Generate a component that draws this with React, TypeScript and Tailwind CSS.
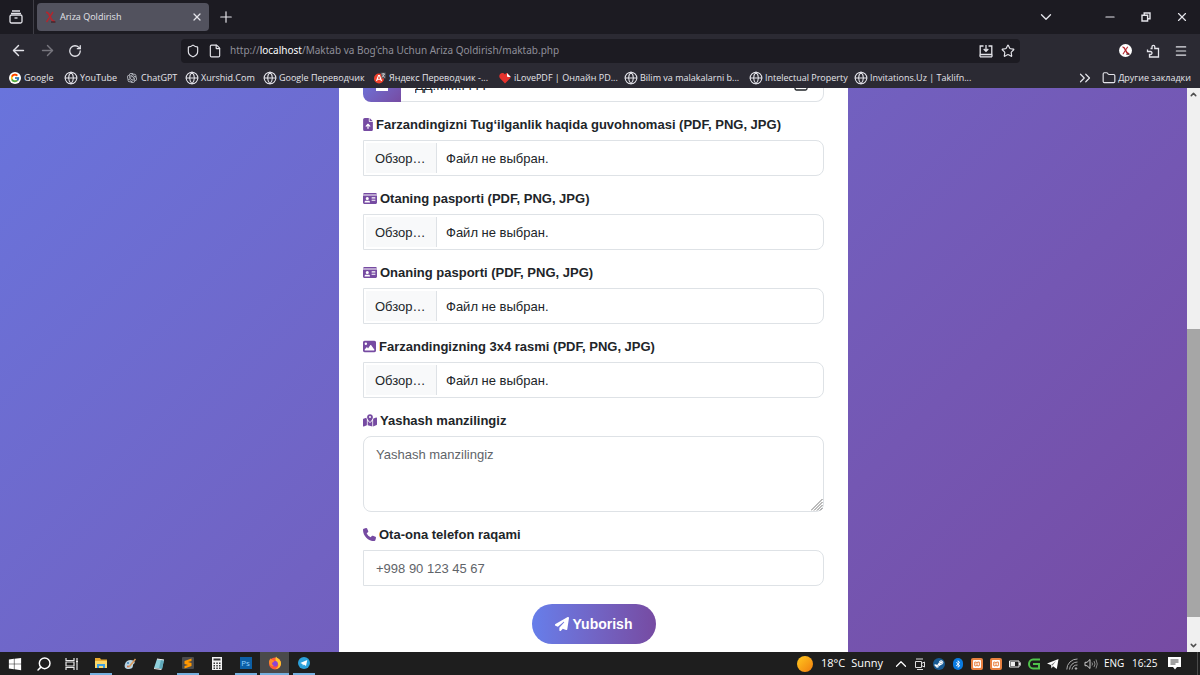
import React from "react";
import {
  FaBluetoothB,
  FaFileArrowUp,
  FaIdCard,
  FaImage,
  FaMapLocationDot,
  FaPaperPlane,
  FaPhone,
  FaSteamSymbol,
  FaWindows,
} from "react-icons/fa6";
import { FcGoogle } from "react-icons/fc";
import { RiOpenaiFill } from "react-icons/ri";
import { SiXampp } from "react-icons/si";
import {
  ArrowLeft,
  ArrowRight,
  ChevronDown,
  ChevronsRight,
  ChevronUp,
  File,
  Folder,
  Globe,
  Menu,
  Minus,
  Plus,
  RotateCw,
  Search,
  Shield,
  Star,
  X,
} from "lucide-react";

const XLogo = ({ className }: { className: string }) => (
  <svg viewBox="0 0 12 12" className={className} fill="none">
    <path d="M2 1.500C4 1 5 3 6 5.500S9 10.500 11 10.500" stroke="#b3262e" strokeWidth="1.800" />
    <path d="M9 1 2.500 11" stroke="#b3262e" strokeWidth="1.400" />
    <path d="M7 11h4.500" stroke="#3b2026" strokeWidth="1.200" />
  </svg>
);

const YandexIcon = () => (
  <svg viewBox="0 0 12 12" className="size-3">
    <circle cx="5" cy="6.500" r="5" fill="#f0402c" />
    <path d="m2.500 9 2-5.500h1L7.500 9M3.300 7.300h3" stroke="#fff" strokeWidth="1.100" fill="none" />
    <path d="M6.500.5H12v6H8z" fill="#4a4a52" />
    <path d="M7.500 2H11M9.200 1v1M8 5.500 10.500 2M8.500 3.300 11 5.500" stroke="#ddd" strokeWidth=".8" fill="none" />
  </svg>
);

const LoveIcon = () => (
  <svg viewBox="0 0 12 12" className="size-3">
    <path d="M6 11.500 1 6.300C-.8 3.800 1 1 3.300 1 4.600 1 5.500 1.600 6 2.500 6.500 1.600 7 1 8 1l3.800 4c0 .6-.4 1-.8 1.500z" fill="#e5322d" />
    <path d="m8 1 3.800 4H9a1 1 0 0 1-1-1z" fill="#fff" />
  </svg>
);

const globe = <Globe className="-mx-px size-[14px]" strokeWidth={1.8} />;

const bookmarks = [
  { name: "Google", icon: <span className="rounded-full bg-white p-px"><FcGoogle className="size-[10px]" /></span>, width: "w-[56px]" },
  { name: "YouTube", icon: globe, width: "w-[61px]" },
  { name: "ChatGPT", icon: <RiOpenaiFill className="size-3 text-gray-300" />, width: "w-[60px]" },
  { name: "Xurshid.Com", icon: globe, width: "w-[78px]" },
  { name: "Google Переводчик", icon: globe, width: "w-[110px]" },
  { name: "Яндекс Переводчик -...", icon: <YandexIcon />, width: "w-[125px]" },
  { name: "iLovePDF | Онлайн PD...", icon: <LoveIcon />, width: "w-[126px]" },
  { name: "Bilim va malakalarni b...", icon: globe, width: "w-[125px]" },
  { name: "Intelectual Property", icon: globe, width: "w-[105px]" },
  { name: "Invitations.Uz | Taklifn...", icon: globe, width: "w-[120px]" },
];

const TabBar = () => {
  return (
    <div className="flex h-[34px] items-center bg-[#1c1b22]">
      <button type="button" aria-label="Firefox View" className="flex h-full w-[34px] items-center justify-center border-r border-[#3f3e46] pr-[2px]">
        <svg viewBox="0 0 14 14" className="size-[14px]" fill="none" stroke="#e4e4ea" strokeWidth="1.300">
          <path d="M3 1h8M2 3.300h10" />
          <rect x="1" y="5" width="12" height="8" rx="1.500" />
          <path d="M5.500 8h3" />
        </svg>
      </button>
      <div className="ml-[3px] flex h-7 w-[172px] items-center rounded bg-[#52525e] pr-[6px] pl-[7px]">
        <XLogo className="size-3" />
        <span className="ml-1 flex-1">Ariza Qoldirish</span>
        <button type="button" aria-label="Close tab">
          <X className="size-3" strokeWidth={2.5} />
        </button>
      </div>
      <button type="button" aria-label="New tab" className="ml-2">
        <Plus className="size-[18px]" strokeWidth={1.6} />
      </button>
      <div className="flex flex-1 justify-end">
        <button type="button" aria-label="List tabs" className="mr-7 flex w-9 justify-center">
          <ChevronDown className="size-[18px]" strokeWidth={1.8} />
        </button>
        <button type="button" aria-label="Minimize" className="flex w-9 items-center justify-center">
          <Minus className="size-[14px]" />
        </button>
        <button type="button" aria-label="Restore" className="flex w-9 items-center justify-center">
          <svg viewBox="0 0 10 10" className="size-[10px]" fill="none" stroke="#e4e4ea" strokeWidth="1.400">
            <path d="M1 3.200h5.600V9H1zM3.200 3V1H9v5.800H6.800" />
          </svg>
        </button>
        <button type="button" aria-label="Close" className="flex w-9 items-center justify-center">
          <X className="size-[14px]" strokeWidth={2} />
        </button>
      </div>
    </div>
  );
};

const NavBar = () => {
  return (
    <div className="flex h-[33px] items-center">
      <div className="flex w-[181px] items-center gap-3 pl-[10px]">
        <button type="button" aria-label="Back"><ArrowLeft className="size-[17px]" /></button>
        <button type="button" aria-label="Forward" className="text-[#77767e]"><ArrowRight className="size-[17px]" /></button>
        <button type="button" aria-label="Reload"><RotateCw className="size-[14px]" strokeWidth={2.2} /></button>
      </div>
      <div className="flex h-6 flex-1 items-center gap-2 rounded bg-[#1c1b22] px-[5px]">
        <Shield className="size-[14px]" />
        <File className="size-[14px]" />
        <div className="flex-1 font-['Noto_Sans','Open_Sans',sans-serif] text-[10px] text-[#8f8f99]">
          http://<span className="text-[#fbfbfe]">localhost</span>/Maktab va Bog'cha Uchun Ariza Qoldirish/maktab.php
        </div>
        <button type="button" aria-label="Install">
          <svg viewBox="0 0 14 14" className="size-[14px]" fill="none" stroke="#e4e4ea" strokeWidth="1.300">
            <path d="M4.500 2H1.200v8.500h11.600V2H9.500M7 1v6M4.700 5 7 7.300 9.300 5M1 12.800h12M1 10.500v2.300M13 10.500v2.300" />
          </svg>
        </button>
        <button type="button" aria-label="Bookmark"><Star className="size-[14px]" /></button>
      </div>
      <div className="flex w-[180px] items-center justify-end gap-[14px] pr-3">
        <button type="button" aria-label="Account" className="rounded-full bg-white p-[2px]">
          <XLogo className="size-[9px]" />
        </button>
        <button type="button" aria-label="Extensions">
          <svg viewBox="0 0 14 14" className="size-[14px]" fill="none" stroke="#e4e4ea" strokeWidth="1.300">
            <path d="M4.500 4.500H6V2.800a1.400 1.400 0 0 1 2.800 0v1.700h3.700V13h-9v-2.500h1a1.500 1.500 0 0 0 0-3H1.500V5.500" />
          </svg>
        </button>
        <button type="button" aria-label="Menu"><Menu className="size-[14px]" /></button>
      </div>
    </div>
  );
};

const Bookmarks = () => {
  return (
    <div className="flex h-[21px] items-center overflow-hidden px-[9px]">
      {bookmarks.map((b) => (
        <a key={b.name} href="#" className={`flex shrink-0 items-center gap-[3px] whitespace-nowrap ${b.width}`}>
          {b.icon}
          {b.name}
        </a>
      ))}
      <div className="flex flex-1 items-center justify-end whitespace-nowrap">
        <button type="button" aria-label="More bookmarks" className="mr-2">
          <ChevronsRight className="size-[18px]" strokeWidth={1.6} />
        </button>
        <a href="#" className="flex items-center gap-[2px]">
          <Folder className="size-[14px]" />
          Другие закладки
        </a>
      </div>
    </div>
  );
};

const FieldLabel = ({ id, icon, children }: { id: string; icon: React.ReactNode; children: React.ReactNode }) => (
  <label htmlFor={id} className="mt-3 mb-[6px] flex h-5 items-center gap-[3px] pt-px font-bold text-[#212529]">
    <span className="text-[#764ba2]">{icon}</span>
    {children}
  </label>
);

const files = [
  { id: "guvohnoma", label: "Farzandingizni Tug‘ilganlik haqida guvohnomasi (PDF, PNG, JPG)", icon: <FaFileArrowUp className="h-[13px] w-[10px]" /> },
  { id: "ota", label: "Otaning pasporti (PDF, PNG, JPG)", icon: <FaIdCard className="h-[13px] w-[14px]" /> },
  { id: "ona", label: "Onaning pasporti (PDF, PNG, JPG)", icon: <FaIdCard className="h-[13px] w-[14px]" /> },
  { id: "rasm", label: "Farzandingizning 3x4 rasmi (PDF, PNG, JPG)", icon: <FaImage className="size-[13px]" /> },
];

const Form = () => {
  return (
    <form className="flex w-full max-w-[509px] flex-col bg-white px-6 pb-2 font-['Liberation_Sans',Arial,sans-serif] text-[13px] text-[#212529]">
      <div className="flex h-9">
        <span className="flex w-[38px] items-center justify-center rounded-bl-lg bg-linear-135 from-[#667eea] to-[#764ba2]">
          <svg viewBox="0 0 12 14" className="h-[14px] w-3" fill="#fff">
            <path d="M3 0h1.500v2h3V0H9v2h3v3H0V2h3zM0 6h12v8H0z" />
          </svg>
        </span>
        <div className="flex flex-1 items-center rounded-r-lg border border-l-0 border-[#dee2e6] px-3">
          <input type="text" aria-label="Tug‘ilgan sana" placeholder="ДД.ММ.ГГГГ" className="min-w-0 flex-1 pt-1 pl-[2px] outline-none placeholder:text-[#212529]" />
          <svg viewBox="0 0 14 14" className="mr-[3px] size-[14px]" fill="none" stroke="#212529" strokeWidth="1.300">
            <rect x="1" y="2" width="12" height="11" rx="1.500" />
            <path d="M1 5.500h12M4 0v3M10 0v3" />
          </svg>
        </div>
      </div>

      {files.map((f) => (
        <div key={f.id}>
          <FieldLabel id={f.id} icon={f.icon}>{f.label}</FieldLabel>
          <label htmlFor={f.id} className="flex h-9 items-center rounded-r-lg border border-[#dee2e6] p-[2px]">
            <input id={f.id} type="file" className="sr-only" />
            <span className="flex h-full w-[71px] items-center border-r border-[#dee2e6] bg-[#f8f9fa] pt-[2px] pl-[9px]">Обзор…</span>
            <span className="ml-[9px] pt-[2px]">Файл не выбран.</span>
          </label>
        </div>
      ))}

      <FieldLabel id="manzil" icon={<FaMapLocationDot className="h-[13px] w-[14px]" />}>Yashash manzilingiz</FieldLabel>
      <div className="relative h-[76px]">
        <textarea
          id="manzil"
          placeholder="Yashash manzilingiz"
          className="block h-full w-full resize-none rounded-lg border border-[#dee2e6] px-3 py-2 outline-none placeholder:text-[#5f6469]"
        />
        <svg viewBox="0 0 12 12" className="absolute right-px bottom-px size-3" stroke="#777" strokeWidth="1">
          <path d="M0 11.500 11.500 0M3 11.500 11.500 3M6 11.500 11.500 6M9 11.500 11.500 9" />
        </svg>
      </div>

      <FieldLabel id="telefon" icon={<FaPhone className="size-[13px]" />}>Ota-ona telefon raqami</FieldLabel>
      <input
        id="telefon"
        type="tel"
        placeholder="+998 90 123 45 67"
        className="h-9 w-full rounded-r-lg border border-[#dee2e6] px-3 outline-none placeholder:text-[#5f6469]"
      />

      <button
        type="submit"
        className="mt-[18px] flex h-10 w-[124px] items-center justify-center gap-1 self-center rounded-full bg-linear-90 from-[#667eea] to-[#764ba2] text-sm font-bold text-white"
      >
        <FaPaperPlane className="size-[14px]" />
        Yuborish
      </button>
    </form>
  );
};

const ScrollBar = () => {
  return (
    <div className="flex w-[13px] flex-col items-center bg-[#f0f0f0] text-[#505050]">
      <ChevronUp className="my-[2px] size-[9px]" strokeWidth={4} />
      <div className="grow-[228]" />
      <div className="w-full grow-[287] bg-[#a6a6a6]" />
      <div className="grow-[22]" />
      <ChevronDown className="my-[2px] size-[9px]" strokeWidth={4} />
    </div>
  );
};

const apps = [
  { name: "Start", icon: <FaWindows className="size-[14px]" />, open: false },
  { name: "Search", icon: <Search className="size-4 -scale-x-100" strokeWidth={2.2} />, open: false },
  {
    name: "Task view",
    icon: (
      <svg viewBox="0 0 14 14" className="size-[14px]" fill="none" stroke="#e8e8e8" strokeWidth="1.200">
        <path d="M1 1v2.500h8V1M1 13v-2.500h8V13M1 5h8v4H1zM12 1v12M11 4.500h2" />
      </svg>
    ),
    open: false,
  },
  {
    name: "Explorer",
    icon: (
      <svg viewBox="0 0 14 12" className="h-3 w-[14px]">
        <path d="M1 1h5l1 1.500h6V11H1z" fill="#e8a92e" />
        <path d="M1 4h12v7H1z" fill="#fbd86a" />
        <path d="M3 7h8v4H9V9H5v2H3z" fill="#3d9fe0" />
      </svg>
    ),
    open: true,
  },
  {
    name: "Paint",
    icon: (
      <svg viewBox="0 0 14 14" className="size-[14px]">
        <path d="M2 7c1-4 6-5 9-3 2 2-1 3-1 4s0 4-4 4-5-2-4-5z" fill="#b9d3e2" />
        <circle cx="5" cy="6" r="1" fill="#3e7fb5" />
        <circle cx="5" cy="9.500" r="1" fill="#cc6240" />
        <path d="m6 10 6.500-8" stroke="#d99a5b" strokeWidth="1.500" />
      </svg>
    ),
    open: false,
  },
  {
    name: "Notepad",
    icon: (
      <svg viewBox="0 0 14 14" className="size-[14px]">
        <path d="m5 2 7 1-2 9-8-1z" fill="#8fd0dc" />
        <path d="m9 2.500 3 .5-2 9-3-.5z" fill="#5fa9ba" />
        <path d="m2 11 8 1-1 1-7-1z" fill="#e6e6e6" />
        <path d="m5 2 7 1" stroke="#eee" />
      </svg>
    ),
    open: false,
  },
  {
    name: "Sublime Text",
    icon: (
      <svg viewBox="0 0 14 14" className="size-[14px]">
        <rect x="1" y="1" width="12" height="12" rx="1" fill="#4b4b4b" />
        <path d="m10.500 2.500-7 2.500v3l3.500 1-3.500 1v2.500l7-2.500V7L7 6l3.500-1z" fill="#ff9800" />
      </svg>
    ),
    open: true,
  },
  {
    name: "Calculator",
    icon: (
      <svg viewBox="0 0 10 13" className="h-[13px] w-[10px]">
        <path d="M0 0h10v13H0z" fill="#f2f2f2" />
        <path d="M1.500 1.500h7v2h-7zM1.500 5.500H3V7H1.500zM4.300 5.500h1.500V7H4.300zM7 5.500h1.500V7H7zM1.500 8H3v1.500H1.500zM4.300 8h1.500v1.500H4.300zM7 8h1.500v1.500H7zM1.500 10.500H3V12H1.500zM4.300 10.500h1.500V12H4.300zM7 10.500h1.500V12H7z" fill="#333" />
      </svg>
    ),
    open: false,
  },
  {
    name: "Photoshop",
    icon: <span className="flex size-3 items-center justify-center bg-[#0c5fa5] text-[8px] leading-none text-[#8fd0ff]">Ps</span>,
    open: true,
  },
  {
    name: "Firefox",
    icon: (
      <svg viewBox="0 0 14 14" className="size-[14px]">
        <circle cx="7" cy="7.500" r="6" fill="#ff5a36" />
        <path d="M8 .5c1 2 5.500 3 5 7.500-.3 3-3 5-5.500 5 4-2 3-5 1.500-6.500C7.500 5 7 3 8 .5z" fill="#ffc42e" />
        <circle cx="7" cy="7.800" r="2.800" fill="#8b45d6" />
        <path d="M1.500 4C2 3 2.500 2.500 3 2.200c.3 1 1 1.500 2 1.800C6 4.500 6.500 6 5 6.300 3 6.800 4 9 6 10c-4 1-6-3-4.500-6z" fill="#ff8a2b" />
      </svg>
    ),
    open: true,
  },
  {
    name: "Telegram",
    icon: (
      <svg viewBox="0 0 12 12" className="size-3">
        <circle cx="6" cy="6" r="6" fill="#2ba0da" />
        <path d="M2.300 5.900 9.300 3 8 9 5.800 7.600 4.900 8.700 4.500 7z" fill="#fff" />
      </svg>
    ),
    open: true,
  },
];

const tray = [
  { name: "Show hidden icons", icon: <ChevronUp className="size-[18px]" strokeWidth={1.6} /> },
  {
    name: "Meet Now",
    icon: (
      <svg viewBox="0 0 12 12" className="size-3" fill="none" stroke="#ddd">
        <path d="M2 1h7M1.500 3.500h6v6h-6zM7.500 5.500 10.500 4v5L7.500 7.500M3 11.500h6" />
      </svg>
    ),
  },
  { name: "Steam", icon: <span className="rounded-full bg-[#175a92] p-px"><FaSteamSymbol className="size-[10px]" /></span> },
  { name: "Bluetooth", icon: <span className="rounded-full bg-[#0a7be0] px-px py-[2px]"><FaBluetoothB className="size-2" /></span> },
  { name: "XAMPP", icon: <span className="rounded-xs bg-[#e8803f] p-[2px]"><SiXampp className="size-2" /></span> },
  { name: "XAMPP control", icon: <span className="rounded-xs bg-[#e8803f] p-[2px]"><SiXampp className="size-2" /></span> },
  {
    name: "Battery",
    icon: (
      <svg viewBox="0 0 12 8" className="h-2 w-3">
        <path d="M.5 1h9.500v6H.5zM10.500 3H12v2h-1.500z" fill="none" stroke="#eee" />
        <path d="M1.500 2H6v4H1.500z" fill="#eee" />
      </svg>
    ),
  },
  {
    name: "Camtasia",
    icon: (
      <svg viewBox="0 0 12 12" className="size-3" fill="none" stroke="#4fc34b" strokeWidth="2">
        <path d="M12 1.500H5a4 4.500 0 0 0 0 9h7M5 6h6v4" />
      </svg>
    ),
  },
  {
    name: "Telegram",
    icon: (
      <svg viewBox="0 0 12 12" className="size-3" fill="#fff">
        <path d="M0 5.500 11.500 1 9.800 11 6 8.300 4.500 10.500 4 7z" />
        <path d="m4 7 5-4-3.500 4.500" fill="#777" />
      </svg>
    ),
  },
  {
    name: "Network",
    icon: (
      <svg viewBox="0 0 12 12" className="size-3" fill="none" stroke="#aaa">
        <path d="M.8 11.500A10.500 10.500 0 0 1 11.500 1M3.500 11.500a8 8 0 0 1 8-7.500M6 11.500A5.500 5.500 0 0 1 11.500 7" />
        <circle cx="10" cy="10.500" r=".8" fill="#eee" />
      </svg>
    ),
  },
  {
    name: "Volume",
    icon: (
      <svg viewBox="0 0 14 12" className="h-3 w-[14px]" fill="none" stroke="#ccc">
        <path d="M1 4.300h2L6 1.500v9L3 7.700H1z" />
        <path d="M8 4.500q1 1.500 0 3M10 3q2 3 0 6M12 1.500q2.500 4.500 0 9" stroke="#888" />
      </svg>
    ),
  },
];

const TaskBar = () => {
  return (
    <footer className="flex h-[23px] shrink-0 items-center justify-between bg-[#1e1e1e] font-['Open_Sans','Noto_Sans',sans-serif] text-white">
      <div className="flex h-full">
        {apps.map((app) => (
          <button
            key={app.name}
            type="button"
            aria-label={app.name}
            className={`flex w-[29px] flex-col items-center first:w-[30px] nth-2:w-7 nth-3:w-7 ${app.name === "Firefox" ? "bg-[#4a4a4a]" : ""}`}
          >
            <span className="flex flex-1 items-center">{app.icon}</span>
            {app.open && <span className={`h-[2px] bg-[#76b0df] ${app.name === "Firefox" ? "w-full" : "w-[22px]"}`} />}
          </button>
        ))}
      </div>
      <div className="flex h-full items-center text-[11px]">
        <span className="mr-2 size-4 rounded-full bg-linear-135 from-[#ffc91f] to-[#ef7d0e]" />
        <span className="mr-[6px]">18°C</span>
        <span className="mr-2">Sunny</span>
        {tray.map((t) => (
          <button key={t.name} type="button" aria-label={t.name} className="flex w-[19px] items-center justify-center">
            {t.icon}
          </button>
        ))}
        <span className="ml-1 w-7 text-[10px]">ENG</span>
        <span className="w-9 text-[10px]">16:25</span>
        <button type="button" aria-label="Notifications" className="mr-4">
          <svg viewBox="0 0 13 13" className="size-[13px]">
            <path d="M0 0h13v10H9l-2 2.500L5 10H0z" fill="#fff" />
            <path d="M2.500 3h8M2.500 5h8M2.500 7h5" stroke="#444" />
          </svg>
        </button>
        <span className="mr-[2px] h-full w-px bg-[#4a4a4a]" />
      </div>
    </footer>
  );
};

const App = () => {
  return (
    <div className="flex h-screen flex-col overflow-hidden">
      <header className="shrink-0 bg-[#2b2a33] font-['Open_Sans','Noto_Sans',sans-serif] text-[9px] text-[#e4e4ea]">
        <TabBar />
        <NavBar />
        <Bookmarks />
      </header>
      <div className="flex min-h-0 flex-1">
        {/* page is scrolled to its end, so the form sits on the bottom edge */}
        <main className="flex min-w-0 flex-1 flex-col items-center justify-end overflow-hidden bg-linear-135 from-[#6974dc] to-[#764ba3]">
          <Form />
        </main>
        <ScrollBar />
      </div>
      <TaskBar />
    </div>
  );
};

export default App;
